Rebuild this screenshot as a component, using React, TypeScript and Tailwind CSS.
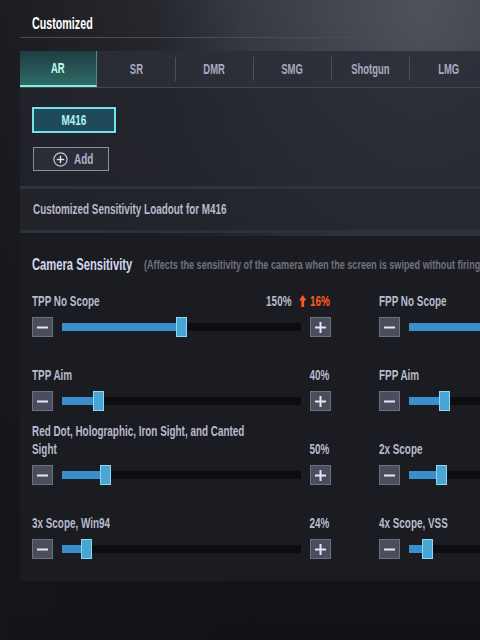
import React from 'react';

const tabs = ['AR', 'SR', 'DMR', 'SMG', 'Shotgun', 'LMG'];

type Row = { label: string[]; value?: string; boost?: string; pos: number };

const leftRows: Row[] = [
  { label: ['TPP No Scope'], value: '150%', boost: '16%', pos: 119 },
  { label: ['TPP Aim'], value: '40%', pos: 36 },
  { label: ['Red Dot, Holographic, Iron Sight, and Canted', 'Sight'], value: '50%', pos: 43 },
  { label: ['3x Scope, Win94'], value: '24%', pos: 24 },
];

const rightRows: Row[] = [
  { label: ['FPP No Scope'], pos: 150 },
  { label: ['FPP Aim'], pos: 35 },
  { label: ['2x Scope'], pos: 32 },
  { label: ['4x Scope, VSS'], pos: 18 },
];

const squeeze = {
  s: 'scale-x-[0.63]',
  m: 'scale-x-[0.66]',
  l: 'scale-x-[0.7]',
};

// the game font is very narrow, squeeze Liberation Sans to match
function N({
  children,
  o = 'left',
  k = 'm',
}: {
  children: React.ReactNode;
  o?: 'left' | 'right' | 'center';
  k?: 's' | 'm' | 'l';
}) {
  const origin = o === 'left' ? 'origin-left' : o === 'right' ? 'origin-right' : 'origin-center';
  return <span className={`inline-block whitespace-nowrap ${squeeze[k]} ${origin}`}>{children}</span>;
}

function StepButton({ kind }: { kind: 'minus' | 'plus' }) {
  return (
    <div className="w-[21px] h-[20px] shrink-0 bg-[#4a4e5c] border border-[#6c7080] flex items-center justify-center">
      <svg width="13" height="13" viewBox="0 0 13 13">
        <rect x="1" y="5.5" width="11" height="2" fill="#e4e7f0" />
        {kind === 'plus' && <rect x="5.5" y="1" width="2" height="11" fill="#e4e7f0" />}
      </svg>
    </div>
  );
}

function Slider({ pos }: { pos: number }) {
  return (
    <div className="flex items-center h-[20px]">
      <StepButton kind="minus" />
      <div className="relative w-[239px] shrink-0 h-[20px] mx-[9px] flex items-center">
        <div className="w-full h-[8px] bg-[#0c0d10]">
          <div className="h-full bg-[#3a8ecc]" style={{ width: pos }} />
        </div>
        <div
          className="absolute top-0 w-[11px] h-[20px] bg-[#48a6d4] border border-[#8fd6f2]"
          style={{ left: pos - 5 }}
        />
      </div>
      <StepButton kind="plus" />
    </div>
  );
}

function SensRow({ row }: { row: Row }) {
  return (
    <div className="h-[74px] flex flex-col justify-end">
      <div className="flex items-end justify-between w-[298px] text-[15px] leading-[18px] text-[#b7bbcb] mb-[7px]">
        <div className="min-w-0">
          {row.label.map((l) => (
            <div key={l}>
              <N>{l}</N>
            </div>
          ))}
        </div>
        {row.value && (
          <N o="right">
            <span className="flex items-center gap-[12px] pr-[1px]">
              <span>{row.value}</span>
              {row.boost && (
                <span className="flex items-center text-[#ff5b1f]">
                  <svg width="11" height="12" viewBox="0 0 11 12" className="mr-[5px]">
                    <path d="M5.5 0 L11 5.5 L7.6 5.5 L7.6 12 L3.4 12 L3.4 5.5 L0 5.5 Z" fill="#ff5b1f" />
                  </svg>
                  {row.boost}
                </span>
              )}
            </span>
          </N>
        )}
      </div>
      <Slider pos={row.pos} />
    </div>
  );
}

export default function App() {
  return (
    <div className="w-[480px] h-[640px] overflow-hidden bg-gradient-to-b from-[#2c2e35] via-[#1b1c22] to-[#111216] font-['Liberation_Sans','Arial',sans-serif] font-bold">
      <div className="h-full bg-[radial-gradient(ellipse_at_88%_2%,rgba(120,128,138,0.45),transparent_45%)]">
        <div className="h-full bg-gradient-to-r from-[#15161a]/70 via-transparent to-transparent">
          <div className="pl-[20px]">
            <div className="h-[38px] flex items-end pl-[12px] pb-[3px] border-b border-[#4a4d58]">
              <span className="text-white text-[17px] leading-[20px]">
                <N k="s">Customized</N>
              </span>
            </div>
            <div className="mt-[13px] h-[37px] flex items-center bg-[#2b2e37]/90 border-b border-[#444752]">
              {tabs.map((t, i) =>
                i === 0 ? (
                  <div
                    key={t}
                    className="w-[77px] h-full shrink-0 flex items-center justify-center text-[15px] text-[#c2fff2] bg-gradient-to-b from-[#1f3d42] to-[#2f6a66] border-b-2 border-r border-b-[#7ff2df] border-r-[#4e8f88]"
                  >
                    <N o="center" k="s">{t}</N>
                  </div>
                ) : (
                  <React.Fragment key={t}>
                    {i > 1 && <div className="w-px h-[24px] shrink-0 bg-[#4c4f5a]" />}
                    <div className={i === 1 ? 'w-[78px] shrink-0 flex items-center justify-center text-[15px] text-[#a7abc0]' : 'w-[77px] shrink-0 flex items-center justify-center text-[15px] text-[#a7abc0]'}>
                      <N o="center" k="s">{t}</N>
                    </div>
                  </React.Fragment>
                )
              )}
            </div>
            <div className="bg-[#23252d]/70 pt-[19px] pl-[12px] pb-[15px] border-b-[3px] border-[#30333c]">
              <div className="w-[84px] h-[26px] bg-[#1f4a59] border-2 border-[#73e3e3] flex items-center justify-center text-[15px] text-[#aef6f6]">
                <N o="center">M416</N>
              </div>
              <div className="mt-[14px] ml-[1px] w-[76px] h-[24px] bg-[#2a2c36] border border-[#8b8e9c] flex items-center pl-[19px] gap-[6px] text-[15px] text-[#aeb2c8]">
                <svg width="15" height="15" viewBox="0 0 15 15" className="shrink-0">
                  <circle cx="7.5" cy="7.5" r="6.6" fill="none" stroke="#c8cbd8" strokeWidth="1.2" />
                  <rect x="3.8" y="6.8" width="7.4" height="1.4" fill="#e0e2ea" />
                  <rect x="6.8" y="3.8" width="1.4" height="7.4" fill="#e0e2ea" />
                </svg>
                <N>Add</N>
              </div>
            </div>
            <div className="h-[44px] flex items-center pl-[13px] bg-[#23252c]/80 border-b-[3px] border-[#2e3039] text-[15px] text-[#b6bacb]">
              <N k="m">Customized Sensitivity Loadout for M416</N>
            </div>
            <div className="mt-[3px] bg-[#1b1c22] pt-[20px] pl-[12px] pb-[22px] overflow-hidden">
              <div className="h-[18px] flex items-center">
                <span className="w-[112px] shrink-0 text-[16px] text-[#d3d7ea]">
                  <N k="l">Camera Sensitivity</N>
                </span>
                <span className="text-[13px] text-[#6f727e]">
                  <N k="l">(Affects the sensitivity of the camera when the screen is swiped without firing)</N>
                </span>
              </div>
              <div className="mt-[-11px] flex gap-[48px]">
                <div className="flex flex-col shrink-0">
                  {leftRows.map((r) => (
                    <SensRow key={r.label[0]} row={r} />
                  ))}
                </div>
                <div className="flex flex-col shrink-0">
                  {rightRows.map((r) => (
                    <SensRow key={r.label[0]} row={r} />
                  ))}
                </div>
              </div>
            </div>
          </div>
        </div>
      </div>
    </div>
  );
}
